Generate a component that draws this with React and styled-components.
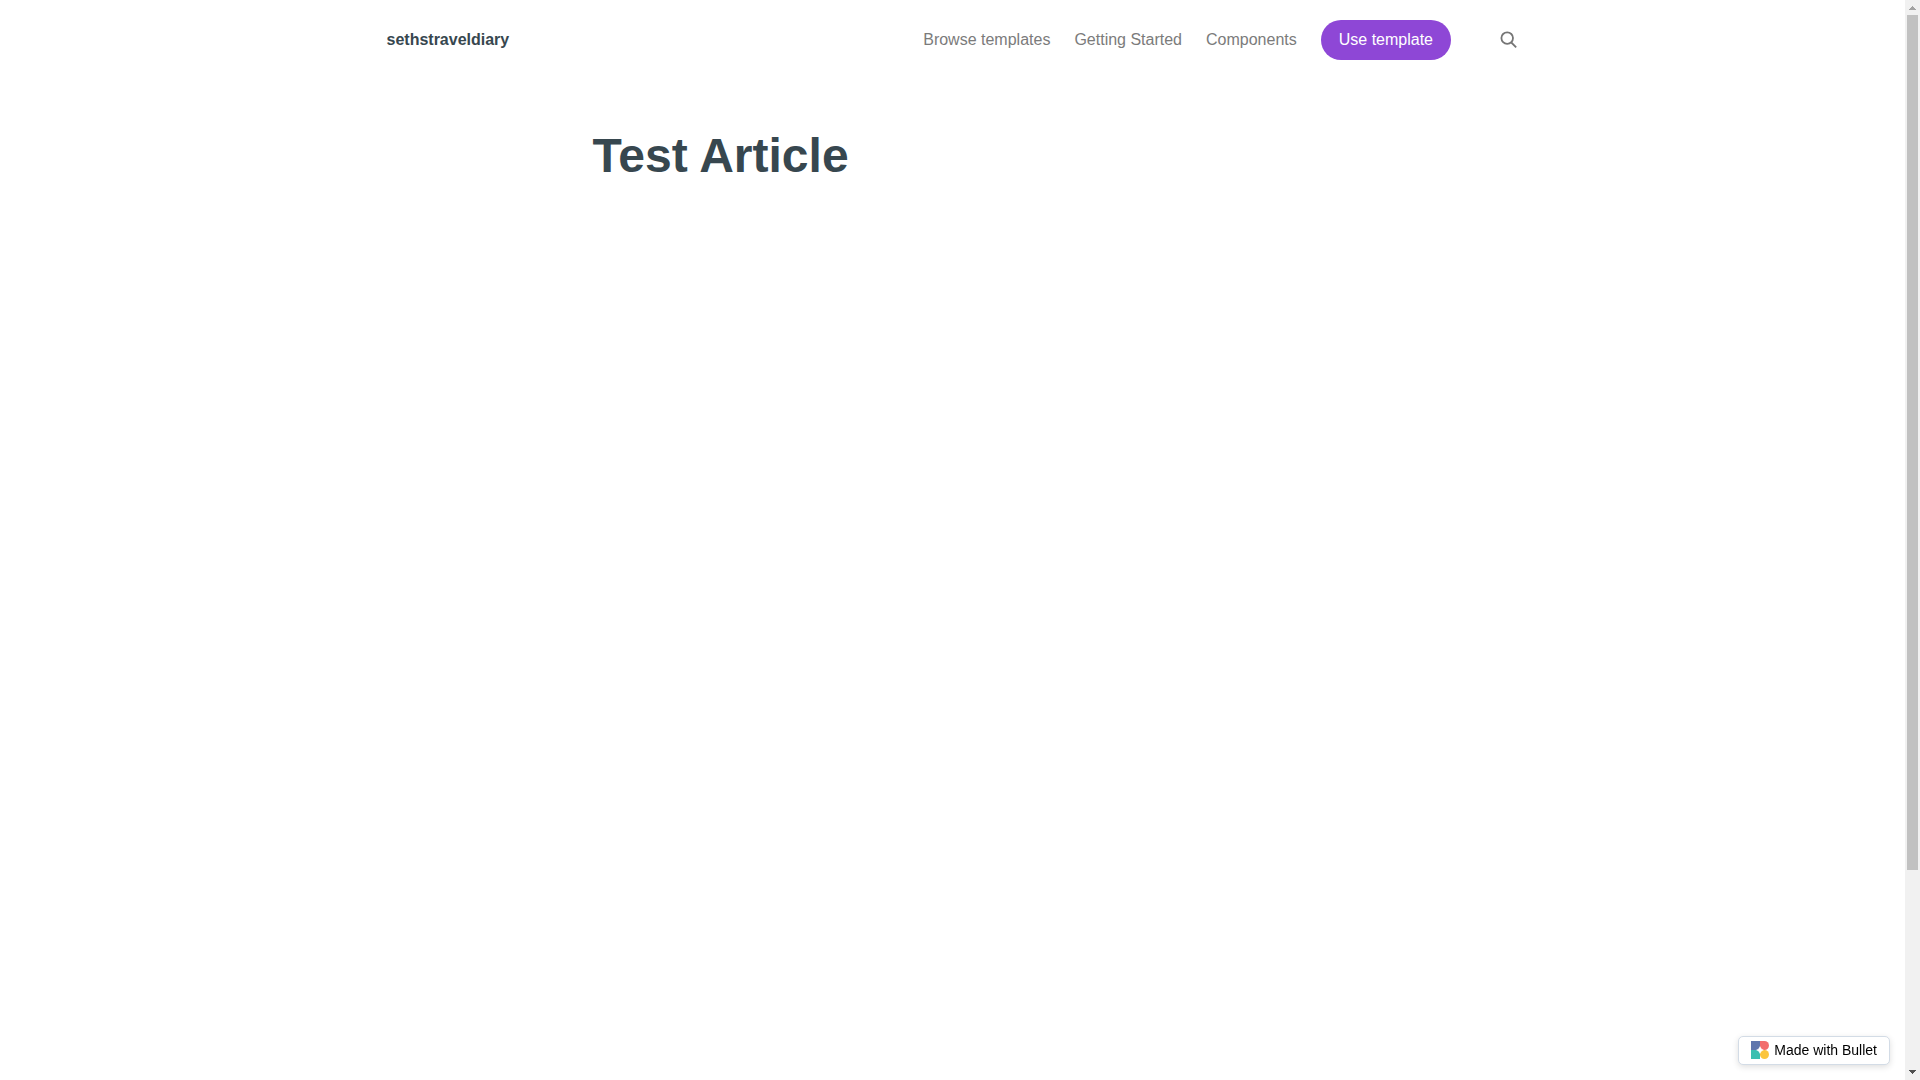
import React from 'react';
import styled, { createGlobalStyle } from 'styled-components';

const GlobalStyle = createGlobalStyle`
  * {
    box-sizing: border-box;
  }

  body {
    margin: 0;
    overflow: hidden;
    background: #fff;
    font-family: "Liberation Sans", Arial, sans-serif;
  }
`;

const Layout = styled.div`
  display: flex;
  height: 100vh;
`;

const Page = styled.div`
  flex: 1;
  min-width: 0;
`;

const Header = styled.header`
  display: flex;
  align-items: center;
  width: 1132px;
  height: 80px;
  margin: 0 auto;
  padding-right: 1.5px;
`;

const Brand = styled.a`
  margin-right: auto;
  font-size: 16px;
  font-weight: 700;
  line-height: 24px;
  color: #37474f;
`;

const Nav = styled.nav`
  display: flex;
  align-items: center;
  gap: 24px;
  margin-right: 48px;
`;

const NavLink = styled.a`
  font-size: 16px;
  line-height: 24px;
  color: #7b7b7b;
`;

const TemplateButton = styled.button`
  height: 40px;
  padding: 0 18px;
  border: 0;
  border-radius: 20px;
  background: #8e47d6;
  color: #fff;
  font-family: inherit;
  font-size: 16px;
  line-height: 24px;
`;

const SearchIcon = styled.svg`
  display: block;
  width: 18px;
  height: 18px;
`;

const Article = styled.main`
  width: 720px;
  margin: 0 auto;
  padding-top: 40px;
`;

const Title = styled.h1`
  margin: 0;
  font-size: 48px;
  font-weight: 700;
  line-height: 72px;
  color: #37474f;
`;

const Badge = styled.a`
  position: fixed;
  right: 30px;
  bottom: 15px;
  display: flex;
  align-items: center;
  gap: 5px;
  height: 29px;
  padding: 0 12px 1px;
  border: 1px solid #d3dce6;
  border-radius: 5px;
  background: #fff;
  box-shadow: 0 2px 6px rgba(0, 0, 0, 0.13);
  color: #000;
  font-size: 14px;
  line-height: 20px;
  white-space: nowrap;
`;

const Scrollbar = styled.div`
  display: flex;
  flex-direction: column;
  justify-content: space-between;
  width: 15px;
  background: #f1f1f1;
`;

const Arrow = styled.svg`
  display: block;
  width: 15px;
  height: 15px;
`;

const Thumb = styled.div`
  height: 855px;
  margin: 0 2px auto;
  background: #c1c1c1;
`;

const links = ['Browse templates', 'Getting Started', 'Components'];

const App = () => {
  return (
    <Layout>
      <GlobalStyle />
      <Page>
        <Header>
          <Brand>sethstraveldiary</Brand>
          <Nav>
            {links.map((link) => (
              <NavLink key={link}>{link}</NavLink>
            ))}
            <TemplateButton>Use template</TemplateButton>
          </Nav>
          <SearchIcon viewBox="0 0 18 18" fill="none" stroke="#757575" strokeWidth="1.8">
            <circle cx="8.2" cy="7.1" r="5.8" />
            <path d="M12.3 11.5l4.9 4.8" />
          </SearchIcon>
        </Header>
        <Article>
          <Title>Test Article</Title>
        </Article>
      </Page>

      <Badge>
        <svg width="18" height="18" viewBox="0 0 18 18">
          <path d="M0 0h9v9H0z" fill="#5f76ad" />
          <path d="M9 0h4.5a4.5 4.5 0 0 1 0 9H9z" fill="#f26d6d" />
          <path d="M0 9h9v9H0z" fill="#3bbfb0" />
          <path d="M9 9h4.5a4.5 4.5 0 1 1-4.5 4.5z" fill="#fbc53d" />
          <path d="M9 5.6Q9.7 8.3 12.4 9Q9.7 9.7 9 12.4Q8.3 9.7 5.6 9Q8.3 8.3 9 5.6z" fill="#fff" stroke="#fff" strokeWidth="0.5" />
        </svg>
        Made with Bullet
      </Badge>

      <Scrollbar>
        <Arrow viewBox="0 0 15 15" shapeRendering="crispEdges">
          <path d="M4 10h7L7.5 6z" fill="#a3a3a3" />
        </Arrow>
        <Thumb />
        <Arrow viewBox="0 0 15 15" shapeRendering="crispEdges">
          <path d="M4 5h7L7.5 9z" fill="#505050" />
        </Arrow>
      </Scrollbar>
    </Layout>
  );
};

export default App;
